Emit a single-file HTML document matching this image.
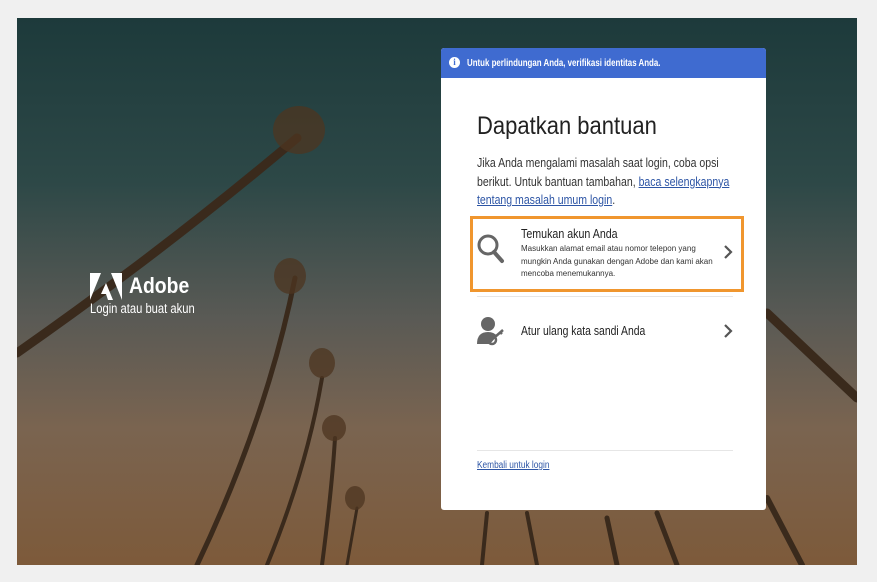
<!DOCTYPE html>
<html><head><meta charset="utf-8"><style>
*{margin:0;padding:0;box-sizing:border-box}
body{width:877px;height:582px;background:#f0f0f0;position:relative;overflow:hidden;font-family:"Liberation Sans",sans-serif}
#bg{position:absolute;left:17px;top:18px;width:840px;height:547px;background:linear-gradient(180deg,#1d3a3b 0%,#2d4847 30%,#5a5a55 55%,#7a6450 75%,#7d5a3a 100%);overflow:hidden}
#card{position:absolute;left:441px;top:48px;width:325px;height:462px;background:#fff;border-radius:3px;overflow:hidden}
.n{transform-origin:0 0;white-space:nowrap}
#hdr{height:30px;background:#3f6bd0;position:relative}
#hdr .i{position:absolute;left:8px;top:9px;width:11px;height:11px;border-radius:50%;background:#fff;color:#3f6bd0;font-size:9px;text-align:center;line-height:11px;font-family:"Liberation Serif",serif;font-weight:bold}
a{color:#2d55a5;text-decoration:underline}
#box{position:absolute;left:29px;top:168px;width:274px;height:76px;border:3px solid #f0962e}
.abs{position:absolute}
hr{position:absolute;border:0;border-top:1px solid #e6e6e6}
</style></head><body>
<div id="bg">
<svg width="840" height="547" style="position:absolute;left:0;top:0">
<g stroke="#3a2a1c" fill="none" stroke-linecap="round">
<path d="M0 335 Q150 230 280 120" stroke-width="9"/>
<path d="M180 547 Q250 400 278 260" stroke-width="5"/>
<path d="M250 547 Q290 450 305 360" stroke-width="4"/>
<path d="M305 547 Q315 470 318 420" stroke-width="4"/>
<path d="M330 547 L340 490" stroke-width="3"/>
<path d="M840 380 L750 295" stroke-width="9"/>
<path d="M785 547 L750 480" stroke-width="6"/>
<path d="M600 547 L590 500" stroke-width="5"/>
<path d="M660 547 L640 495" stroke-width="5"/>
<path d="M520 547 L510 495" stroke-width="4"/>
<path d="M465 547 L470 495" stroke-width="4"/>
</g>
<g fill="#4d3520" opacity=".75">
<ellipse cx="282" cy="112" rx="26" ry="24"/>
<ellipse cx="273" cy="258" rx="16" ry="18"/>
<ellipse cx="305" cy="345" rx="13" ry="15"/>
<ellipse cx="317" cy="410" rx="12" ry="13"/>
<ellipse cx="338" cy="480" rx="10" ry="12"/>
</g>
</svg>
<svg style="position:absolute;left:73px;top:255px" width="32" height="28" viewBox="0 0 32 28"><path d="M0 0H11L0 27Z M21 0H32V27Z M16 10L23 27H18L16 21H11Z" fill="#fff"/></svg>
<div class="abs n" style="left:112px;top:255px;color:#fff;font-size:22px;font-weight:bold;transform:scaleX(.88)">Adobe</div>
<div class="abs n" style="left:73px;top:283px;color:#fff;font-size:13.5px;transform:scaleX(.83)">Login atau buat akun</div>
</div>
<div id="card">
<div id="hdr"><span class="i">i</span><div class="abs n" style="left:26px;top:10px;color:#fff;font-size:10px;font-weight:bold;transform:scaleX(.79)">Untuk perlindungan Anda, verifikasi identitas Anda.</div></div>
<div class="abs n" style="left:36px;top:64px;font-size:25px;color:#222;transform:scaleX(.88)">Dapatkan bantuan</div>
<div class="abs n" style="left:36px;top:106px;font-size:13px;line-height:18.5px;color:#333;transform:scaleX(.81)">Jika Anda mengalami masalah saat login, coba opsi<br>berikut. Untuk bantuan tambahan, <a>baca selengkapnya</a><br><a>tentang masalah umum login</a>.</div>
<div id="box"></div>
<svg style="position:absolute;left:36px;top:186px" width="28" height="30"><circle cx="11" cy="11" r="9" fill="none" stroke="#666" stroke-width="3"/><path d="M17 18L25 27" stroke="#666" stroke-width="4" stroke-linecap="round"/></svg>
<div class="abs n" style="left:80px;top:178px;font-size:13px;color:#222;transform:scaleX(.82)">Temukan akun Anda</div>
<div class="abs n" style="left:80px;top:195px;font-size:8px;line-height:12.5px;color:#333">Masukkan alamat email atau nomor telepon yang<br>mungkin Anda gunakan dengan Adobe dan kami akan<br>mencoba menemukannya.</div>
<svg style="position:absolute;left:282px;top:196px" width="10" height="16"><path d="M2 2L8 8L2 14" fill="none" stroke="#555" stroke-width="2.2"/></svg>
<hr style="left:36px;top:248px;width:256px">
<svg style="position:absolute;left:35px;top:268px" width="30" height="30"><circle cx="12" cy="8" r="7" fill="#666"/><path d="M1 28Q1 16 12 16Q18 16 21 20L14 28Z" fill="#666"/><circle cx="16" cy="24" r="4" fill="none" stroke="#666" stroke-width="2.5"/><path d="M19 21L27 14M24 16l2 2" stroke="#666" stroke-width="2.5"/></svg>
<div class="abs n" style="left:80px;top:275px;font-size:13px;color:#222;transform:scaleX(.8)">Atur ulang kata sandi Anda</div>
<svg style="position:absolute;left:282px;top:275px" width="10" height="16"><path d="M2 2L8 8L2 14" fill="none" stroke="#555" stroke-width="2.2"/></svg>
<hr style="left:36px;top:402px;width:256px">
<div class="abs n" style="left:36px;top:412px;font-size:10px;transform:scaleX(.83)"><a>Kembali untuk login</a></div>
</div>
</body></html>
